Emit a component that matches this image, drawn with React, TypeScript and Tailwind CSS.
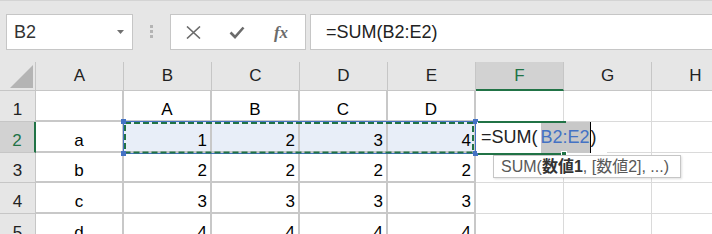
import React from 'react';

const COLS = ['A', 'B', 'C', 'D', 'E', 'F', 'G', 'H'];

const ROWS: { h: string; cells: string[] }[] = [
  { h: 'h-[31px]', cells: ['', 'A', 'B', 'C', 'D'] },
  { h: 'h-[31px]', cells: ['a', '1', '2', '3', '4'] },
  { h: 'h-[30px]', cells: ['b', '2', '2', '2', '2'] },
  { h: 'h-[31px]', cells: ['c', '3', '3', '3', '3'] },
  { h: 'h-[31px]', cells: ['d', '4', '4', '4', '4'] },
];

function FormulaBar() {
  return (
    <div className="h-[62px] bg-[#e6e6e6] border-t border-[#d4d4d4] flex items-start pt-[13px]">
      {/* name box */}
      <div className="ml-[6px] w-[127px] h-[36px] bg-white border border-[#c6c6c6] flex items-center justify-between pl-[7px] pr-[8px]">
        <span className="text-[18px] text-[#333]">B2</span>
        <svg width="7" height="4" viewBox="0 0 7 4">
          <path d="M0 0h7L3.5 4z" fill="#707070" />
        </svg>
      </div>

      {/* grip */}
      <div className="ml-[17px] mt-[11px] flex flex-col gap-[2px]">
        <div className="w-[3px] h-[3px] bg-[#b4b4b4]" />
        <div className="w-[3px] h-[3px] bg-[#b4b4b4]" />
        <div className="w-[3px] h-[3px] bg-[#b4b4b4]" />
      </div>

      {/* cancel / enter / fx */}
      <div className="ml-[17px] w-[136px] h-[36px] bg-white border border-[#c6c6c6] flex items-center">
        <div className="w-[44px] flex justify-center">
          <svg width="15" height="13" viewBox="0 0 15 13">
            <path d="M1 0.5l13 12M14 0.5l-13 12" stroke="#6b6b6b" strokeWidth="1.6" fill="none" />
          </svg>
        </div>
        <div className="w-[44px] flex justify-center">
          <svg width="16" height="13" viewBox="0 0 16 13">
            <path d="M1.5 6.5l4.5 4.5L14.5 1.5" stroke="#6b6b6b" strokeWidth="2.6" fill="none" />
          </svg>
        </div>
        <div className="w-[44px] flex justify-center">
          <span className="font-['Liberation_Serif',serif] italic font-bold text-[17px] text-[#6b6b6b] leading-none">
            fx
          </span>
        </div>
      </div>

      {/* formula input */}
      <div className="ml-[4px] flex-1 h-[36px] bg-white border-y border-l border-[#c6c6c6] flex items-center pl-[15px]">
        <span className="text-[18px] text-[#222] whitespace-nowrap">=SUM(B2:E2)</span>
      </div>
    </div>
  );
}

function HeaderRow() {
  return (
    <div className="flex h-[29px]">
      <div className="relative shrink-0 w-[36px] bg-[#e6e6e6] border-r border-b border-[#c6c6c6]">
        <svg className="absolute right-[2px] bottom-[2px]" width="23" height="23" viewBox="0 0 23 23">
          <path d="M23 0V23H0z" fill="#b4b4b4" />
        </svg>
      </div>
      {COLS.map((c) =>
        c === 'F' ? (
          <div
            key={c}
            className="shrink-0 w-[88px] bg-[#d2d2d2] border-r border-[#c6c6c6] border-b-2 border-b-[#217346] flex items-center justify-center text-[17px] text-[#217346]"
          >
            {c}
          </div>
        ) : (
          <div
            key={c}
            className="shrink-0 w-[88px] bg-[#e6e6e6] border-r border-b border-[#c6c6c6] flex items-center justify-center text-[17px] text-[#222]"
          >
            {c}
          </div>
        )
      )}
    </div>
  );
}

function DataRow({ index, h, cells }: { index: number; h: string; cells: string[] }) {
  const active = index === 2;
  return (
    <div className={`flex ${h}`}>
      {active ? (
        <div className="shrink-0 w-[36px] bg-[#d2d2d2] border-b border-[#c6c6c6] border-r-2 border-r-[#217346] flex items-end justify-center pb-[3px] text-[17px] text-[#217346] leading-none">
          {index}
        </div>
      ) : (
        <div className="shrink-0 w-[36px] bg-[#e6e6e6] border-r border-b border-[#c6c6c6] flex items-end justify-center pb-[3px] text-[17px] text-[#222] leading-none">
          {index}
        </div>
      )}
      {cells.map((v, i) => {
        const centered = i === 0 || index === 1;
        const selected = active && i > 0;
        return (
          <div
            key={i}
            className={`shrink-0 w-[88px] border-r-2 border-b-2 border-[#c8c8c8] flex items-end pb-[2px] text-[17px] text-black leading-none ${
              centered ? 'justify-center' : 'justify-end pr-[3px]'
            } ${selected ? 'bg-[#e8eef8]' : 'bg-white'}`}
          >
            {v}
          </div>
        );
      })}
      <div className="shrink-0 w-[88px] border-r border-b border-[#dadada] bg-white" />
      <div className="shrink-0 w-[88px] border-r border-b border-[#dadada] bg-white" />
      <div className="shrink-0 w-[88px] border-r border-b border-[#dadada] bg-white" />
    </div>
  );
}

function Sheet() {
  return (
    <div className="relative">
      <HeaderRow />
      {ROWS.map((r, i) => (
        <DataRow key={i} index={i + 1} h={r.h} cells={r.cells} />
      ))}

      {/* referenced range B2:E2 */}
      <svg className="absolute left-[121px] top-[57px]" width="358" height="38" viewBox="0 0 358 38">
        <rect x="2.5" y="2.5" width="352" height="32" fill="none" stroke="#4472c4" strokeWidth="1" />
        <rect x="4" y="4" width="348" height="29.5" fill="none" stroke="#217346" strokeWidth="2" strokeDasharray="6 3" />
        <rect x="0" y="0" width="5" height="5" fill="#4472c4" />
        <rect x="352" y="0" width="5" height="5" fill="#4472c4" />
        <rect x="0" y="32" width="5" height="5" fill="#4472c4" />
        <rect x="352" y="32" width="5" height="5" fill="#4472c4" />
      </svg>

      {/* in-cell editor F2 */}
      <div className="absolute left-[477px] top-[60px] h-[31px] bg-white flex items-stretch pl-[4px] pr-[10px] text-[18px] whitespace-nowrap">
        <span className="flex items-center text-[#222]">=SUM(</span>
        <span className="flex items-center ml-[3px] bg-[#c8c8c8] text-[#4472c4]">B2:E2</span>
        <span className="w-[1px] bg-black" />
        <span className="flex items-center text-[#222]">)</span>
      </div>
      <div className="absolute left-[478px] top-[59px] w-[88px] h-[2px] bg-[#217346]" />
      <div className="absolute left-[478px] top-[91px] w-[88px] h-[2px] bg-[#217346]" />
      <div className="absolute left-[561px] top-[89px] w-[6px] h-[6px] bg-[#217346] border border-white" />

      {/* function tooltip */}
      <div className="absolute left-[493px] top-[93px] w-[188px] h-[23px] bg-white border border-[#c6c6c6] shadow-[1px_1px_2px_rgba(0,0,0,0.12)] flex items-center pl-[7px] text-[16px] text-[#595959] whitespace-nowrap">
        SUM(<span className="font-bold text-[#333]">数値1</span>, [数値2], ...)
      </div>
    </div>
  );
}

export default function App() {
  return (
    <div className="w-[712px] h-[234px] overflow-hidden bg-white font-['Liberation_Sans','Noto_Sans_CJK_JP',sans-serif]">
      <FormulaBar />
      <Sheet />
    </div>
  );
}
